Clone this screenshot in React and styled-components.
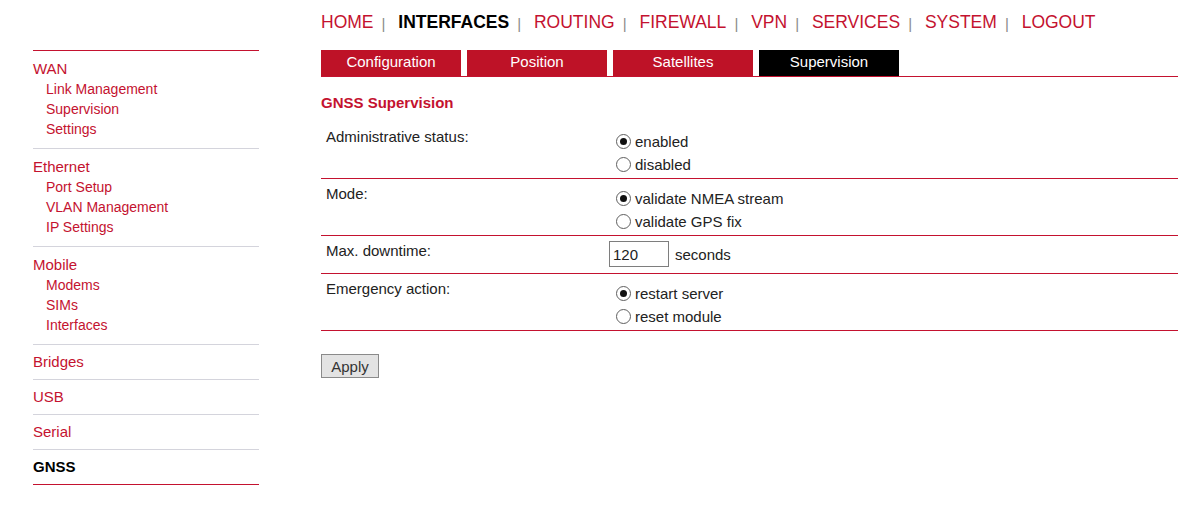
import React from "react";
import styled, { createGlobalStyle } from "styled-components";

const RED = "#c4122f";
const TAB_RED = "#be1227";

const Global = createGlobalStyle`
  html, body { background: #fff; }
  body {
    margin: 8px;
    font-family: "Liberation Sans", Arial, sans-serif;
    color: #222;
  }
  * { box-sizing: border-box; }
`;

const Page = styled.div`
  display: flex;
  align-items: flex-start;
`;

const Sidebar = styled.nav`
  width: 226px;
  margin: 42px 62px 0 25px;
  border-top: 1px solid ${RED};
  border-bottom: 1px solid ${RED};
`;

const Group = styled.div`
  padding: ${(p) => (p.$compact ? "7px 0 7px" : "8px 0 9px")};
  & + & { border-top: 1px solid #d4d4dc; }
`;

const GroupTitle = styled.div`
  font-size: 15px;
  line-height: 20px;
  color: ${(p) => (p.$active ? "#000" : RED)};
  font-weight: ${(p) => (p.$active ? "bold" : "normal")};
`;

const SubItem = styled.div`
  font-size: 14px;
  line-height: 20px;
  padding-left: 13px;
  color: ${RED};
`;

const Main = styled.main`
  width: 857px;
  display: flex;
  flex-direction: column;
`;

const TopNav = styled.div`
  display: flex;
  align-items: center;
  height: 26px;
  margin-top: 1px;
  font-size: 17.5px;
`;

const NavItem = styled.span`
  color: ${(p) => (p.$active ? "#000" : RED)};
  font-weight: ${(p) => (p.$active ? "bold" : "normal")};
`;

const NavSep = styled.span`
  font-size: 15px;
  color: #8a8a8a;
  margin: 3px 12.8px 0 8.1px;
`;

const Tabs = styled.div`
  display: flex;
  gap: 6px;
  margin-top: 15px;
  border-bottom: 1px solid ${RED};
`;

const Tab = styled.div`
  width: 140px;
  height: 26px;
  padding-bottom: 3px;
  display: flex;
  align-items: center;
  justify-content: center;
  font-size: 15px;
  color: #fff;
  background: ${(p) => (p.$active ? "#000" : TAB_RED)};
`;

const SectionTitle = styled.h2`
  margin: 18px 0 11px;
  font-size: 15px;
  line-height: 16px;
  font-weight: bold;
  color: ${RED};
`;

const Row = styled.div`
  display: grid;
  grid-template-columns: 288px 1fr;
  border-bottom: 1px solid ${RED};
  font-size: 15px;
`;

const Label = styled.div`
  padding: 6px 5px 0;
  line-height: 17px;
  color: #222;
`;

const Value = styled.div`
  padding: ${(p) => (p.$input ? "5px 0 6px" : "8px 0 2px")};
  display: flex;
  flex-direction: column;
`;

const RadioLine = styled.label`
  display: flex;
  align-items: center;
  height: 23px;
  color: #222;
`;

const RadioMark = styled.span`
  width: 15px;
  height: 15px;
  margin: 0 4px 0 7px;
  border: 1px solid #5f5f5f;
  border-radius: 50%;
  display: flex;
  align-items: center;
  justify-content: center;
  background: #fff;
  &::after {
    content: "";
    width: 7px;
    height: 7px;
    border-radius: 50%;
    background: ${(p) => (p.$checked ? "#111" : "transparent")};
  }
`;

const InputLine = styled.div`
  display: flex;
  align-items: center;
`;

const NumInput = styled.input`
  width: 60px;
  height: 26px;
  border: 1px solid #7e7e7e;
  padding: 0 3px;
  font-family: "Liberation Sans", Arial, sans-serif;
  font-size: 15px;
  color: #222;
`;

const Unit = styled.span`
  margin-left: 6px;
`;

const ApplyButton = styled.button`
  align-self: flex-start;
  margin-top: 23px;
  width: 58px;
  height: 24px;
  padding: 0;
  font-family: "Liberation Sans", Arial, sans-serif;
  font-size: 15px;
  color: #333;
  background: #e3e3e3;
  border: 1px solid #8a8a8a;
`;

const navItems = ["HOME", "INTERFACES", "ROUTING", "FIREWALL", "VPN", "SERVICES", "SYSTEM", "LOGOUT"];

const sideGroups = [
  { title: "WAN", items: ["Link Management", "Supervision", "Settings"] },
  { title: "Ethernet", items: ["Port Setup", "VLAN Management", "IP Settings"] },
  { title: "Mobile", items: ["Modems", "SIMs", "Interfaces"] },
  { title: "Bridges", items: [] },
  { title: "USB", items: [] },
  { title: "Serial", items: [] },
  { title: "GNSS", items: [], active: true },
];

const tabs = ["Configuration", "Position", "Satellites", "Supervision"];

const Radio = ({ checked, children }) => (
  <RadioLine>
    <RadioMark $checked={checked} />
    {children}
  </RadioLine>
);

const RadioRow = ({ label, options }) => (
  <Row>
    <Label>{label}</Label>
    <Value>
      {options.map((o, i) => (
        <Radio key={o} checked={i === 0}>{o}</Radio>
      ))}
    </Value>
  </Row>
);

export default function App() {
  return (
    <>
      <Global />
      <Page>
        <Sidebar>
          {sideGroups.map((g) => (
            <Group key={g.title} $compact={g.items.length === 0}>
              <GroupTitle $active={g.active}>{g.title}</GroupTitle>
              {g.items.map((it) => (
                <SubItem key={it}>{it}</SubItem>
              ))}
            </Group>
          ))}
        </Sidebar>
        <Main>
          <TopNav>
            {navItems.map((n, i) => (
              <React.Fragment key={n}>
                <NavItem $active={n === "INTERFACES"}>{n}</NavItem>
                {i < navItems.length - 1 && <NavSep>|</NavSep>}
              </React.Fragment>
            ))}
          </TopNav>
          <Tabs>
            {tabs.map((t) => (
              <Tab key={t} $active={t === "Supervision"}>{t}</Tab>
            ))}
          </Tabs>
          <SectionTitle>GNSS Supervision</SectionTitle>
          <RadioRow label="Administrative status:" options={["enabled", "disabled"]} />
          <RadioRow label="Mode:" options={["validate NMEA stream", "validate GPS fix"]} />
          <Row>
            <Label>Max. downtime:</Label>
            <Value $input>
              <InputLine>
                <NumInput defaultValue="120" />
                <Unit>seconds</Unit>
              </InputLine>
            </Value>
          </Row>
          <RadioRow label="Emergency action:" options={["restart server", "reset module"]} />
          <ApplyButton>Apply</ApplyButton>
        </Main>
      </Page>
    </>
  );
}
